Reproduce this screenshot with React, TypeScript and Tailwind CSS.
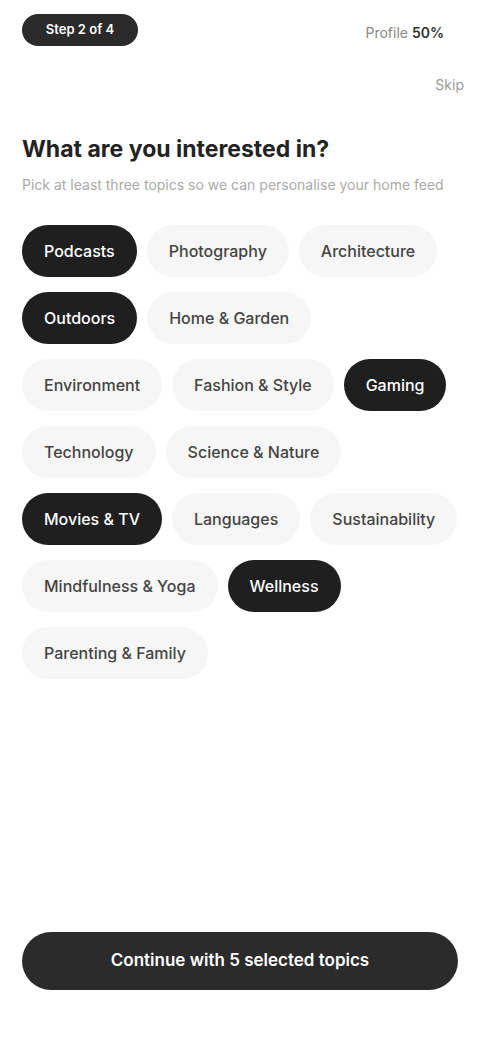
import { useState } from "react";

const TOPICS: string[][] = [
  ["Podcasts", "Photography", "Architecture"],
  ["Outdoors", "Home & Garden"],
  ["Environment", "Fashion & Style", "Gaming"],
  ["Technology", "Science & Nature"],
  ["Movies & TV", "Languages", "Sustainability"],
  ["Mindfulness & Yoga", "Wellness"],
  ["Parenting & Family"],
];

const INITIAL = ["Podcasts", "Outdoors", "Gaming", "Movies & TV", "Wellness"];

function Chip({ label, active, onClick }: { label: string; active: boolean; onClick: () => void }) {
  return (
    <button
      onClick={onClick}
      className={`h-[52px] px-[22px] rounded-full text-[16px] font-medium whitespace-nowrap ${
        active ? "bg-[#1f1f1f] text-white" : "bg-[#f6f6f6] text-[#444]"
      }`}
    >
      {label}
    </button>
  );
}

export default function App() {
  const [selected, setSelected] = useState<string[]>(INITIAL);

  const toggle = (t: string) =>
    setSelected((s) => (s.includes(t) ? s.filter((x) => x !== t) : [...s, t]));

  return (
    <div
      className="min-h-[1040px] w-[480px] bg-white flex flex-col px-[22px]"
      style={{ fontFamily: "Inter, 'Noto Sans', sans-serif" }}
    >
      {/* top bar */}
      <div className="flex items-center justify-between pt-[14px]">
        <div className="h-[32px] w-[116px] rounded-full bg-[#2a2a2a] text-white text-[13px] font-semibold flex items-center justify-center">
          Step 2 of 4
        </div>
        <div className="text-[14px] text-[#888] pr-[14px] mt-[4px]">
          Profile <span className="text-[#333] font-semibold">50%</span>
        </div>
      </div>
      <div className="flex justify-end mt-[28px] -mr-[6px]">
        <span className="text-[14px] text-[#999]">Skip</span>
      </div>

      {/* heading */}
      <h1 className="mt-[40px] text-[23px] font-bold text-[#222] leading-tight">
        What are you interested in?
      </h1>
      <p className="mt-[10px] text-[14px] text-[#aaa]">
        Pick at least three topics so we can personalise your home feed
      </p>

      {/* chips */}
      <div className="mt-[30px] flex flex-col gap-[15px]">
        {TOPICS.map((row, i) => (
          <div key={i} className="flex gap-[10px]">
            {row.map((t) => (
              <Chip key={t} label={t} active={selected.includes(t)} onClick={() => toggle(t)} />
            ))}
          </div>
        ))}
      </div>

      <div className="mt-auto pb-[50px]">
        <button className="w-full h-[58px] rounded-full bg-[#2b2b2b] text-white text-[17px] font-semibold">
          Continue with {selected.length} selected topics
        </button>
      </div>
    </div>
  );
}
